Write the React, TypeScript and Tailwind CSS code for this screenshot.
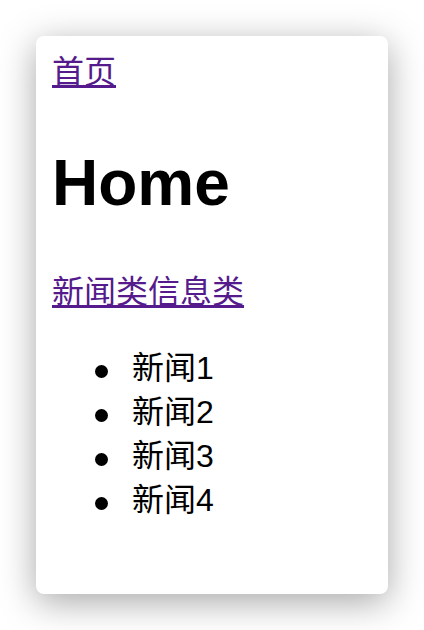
import React from "react";

export default function App() {
  const font = { fontFamily: '"Liberation Sans", "Noto Sans CJK SC", sans-serif' };
  const items = ["新闻1", "新闻2", "新闻3", "新闻4"];
  return (
    <div className="w-[424px] h-[630px] bg-white pt-[36px] pl-[36px]" style={font}>
      <div className="w-[352px] h-[558px] bg-white rounded-[8px] shadow-[0_8px_36px_rgba(0,0,0,0.35)] pt-[14px] px-4 text-black">
        <div className="text-[32px] leading-[44px]">
          <a href="#" className="underline text-[#551a8b]">首页</a>
        </div>
        <h1 className="mt-[57px] text-[64px] leading-[64px] font-bold">Home</h1>
        <div className="mt-[55px] text-[32px] leading-[44px]">
          <a href="#" className="underline text-[#551a8b]">新闻类</a>
          <a href="#" className="underline text-[#551a8b]">信息类</a>
        </div>
        <ul className="mt-[32px] pl-[43px] list-none text-[32px] leading-[44px]">
          {items.map((t) => (
            <li key={t} className="flex items-start">
              <span className="mt-[19px] mr-[24px] w-[13px] h-[13px] rounded-full bg-black shrink-0" />
              <span>{t}</span>
            </li>
          ))}
        </ul>
      </div>
    </div>
  );
}
